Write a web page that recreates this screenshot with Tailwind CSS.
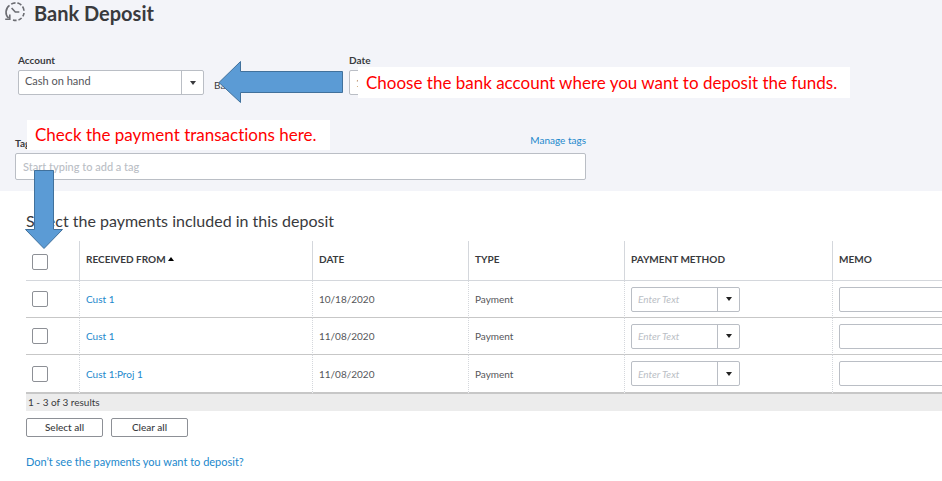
<!DOCTYPE html>
<html lang="en">
<head>
<meta charset="UTF-8">
<meta name="viewport" content="width=device-width, initial-scale=1.0">
<title>Bank Deposit</title>
<script src="https://cdn.jsdelivr.net/npm/@tailwindcss/browser@4"></script>
</head>
<body class="relative min-h-screen overflow-x-hidden bg-white font-['Lato',sans-serif] text-[#393a3d] [font-variant-ligatures:none]">

<!-- Deposit details -->
<header class="bg-[#f3f4f9] pb-[11px]">
  <div class="flex h-[26px] items-center gap-2 pl-1">
    <svg class="size-[22px]" viewBox="0 0 22 22" fill="none" stroke="#6b6c72" stroke-width="1.6" aria-hidden="true">
      <path d="M4.6 16.2A8.3 8.3 0 0 1 5.5 3.4"/>
      <path d="M7.2 2.2A8.3 8.3 0 0 1 20 9.2" stroke-dasharray="4.5 1.8"/>
      <path d="M20 11A8.3 8.3 0 0 1 9 17.9" stroke-dasharray="3.6 2"/>
      <path d="M1.2 17.2h4.6v-4.6"/>
      <path d="M7.6 6l3.7 4h4"/>
    </svg>
    <h1 class="text-[20px] leading-6 font-bold">Bank Deposit</h1>
  </div>

  <div class="mt-7 flex pl-[18px]">
    <div class="w-[186px]">
      <label for="account" class="block text-[10px] leading-3 font-bold">Account</label>
      <div class="relative mt-1 h-[25px]">
        <select id="account" class="block h-full w-full appearance-none rounded-xs border border-[#babec5] bg-white pb-0.5 pl-1.5 text-[11px] text-[#55565a]">
          <option>Cash on hand</option>
        </select>
        <span class="pointer-events-none absolute inset-y-0 right-0 flex w-[23px] items-center justify-center border-l border-[#babec5]">
          <svg class="h-1 w-1.5" viewBox="0 0 6 4" fill="#393a3d"><path d="M0 0h6L3 4z"/></svg>
        </span>
      </div>
    </div>
    <span class="w-[145px] self-end pb-1 pl-[10px] text-[10px] leading-3">Balance</span>
    <div class="w-[110px]">
      <label for="date" class="block text-[10px] leading-3 font-bold">Date</label>
      <input id="date" type="text" value="11/08/2020" class="mt-1 block h-[25px] w-full rounded-xs border border-[#babec5] bg-white px-1.5 text-[11px] text-[#55565a]">
    </div>
  </div>

  <div class="mt-[39px] ml-[15px] max-w-[571px]">
    <div class="flex items-end justify-between">
      <label for="tags" class="pb-1 text-[10px] leading-3 font-bold">Tags</label>
      <a href="#" class="pb-[7px] text-[10px] leading-3 text-[#2288cc]">Manage tags</a>
    </div>
    <input id="tags" type="text" placeholder="Start typing to add a tag" class="block h-[27px] w-full rounded-xs border border-[#babec5] bg-white px-[7px] text-[11px] font-medium placeholder:text-[#babec5]">
  </div>
</header>

<!-- Payments -->
<main class="pl-[26px]">
  <h2 class="pt-5 text-[16px] leading-5">Select the payments included in this deposit</h2>

  <div class="mt-[10px] overflow-hidden">
    <table class="w-full table-fixed border-separate border-spacing-0 text-left text-[10px] leading-3">
      <thead>
        <tr class="h-10 [&>th]:border-b [&>th]:border-[#d4d7dc] [&>th+th]:border-l [&>th+th]:pb-[3px] [&>th+th]:pl-1.5">
          <th class="w-[53px] pt-[3px] pl-1.5"><input type="checkbox" aria-label="Select all payments" class="block size-4 appearance-none rounded-xs border border-[#8d9096] bg-white"></th>
          <th class="w-[233px]">RECEIVED FROM
            <svg class="inline-block h-1 w-1.5 align-[2px]" viewBox="0 0 6 4" fill="#000"><path d="M0 4h6L3 0z"/></svg>
          </th>
          <th class="w-[156px]">DATE</th>
          <th class="w-[156px]">TYPE</th>
          <th class="w-[208px]">PAYMENT METHOD</th>
          <th>MEMO</th>
        </tr>
      </thead>
      <tbody id="payments"></tbody>
    </table>
    <p class="h-[17px] bg-[#ececec] pl-0.5 text-[10px] leading-4">1 - 3 of 3 results</p>
  </div>

  <div class="mt-[7px] flex gap-2">
    <button type="button" class="h-[19px] w-[77px] rounded-xs border border-[#8d9096] bg-white pb-0.5 text-[10px] leading-3 font-medium">Select all</button>
    <button type="button" class="h-[19px] w-[77px] rounded-xs border border-[#8d9096] bg-white pb-0.5 text-[10px] leading-3 font-medium">Clear all</button>
  </div>
  <a href="#" class="mt-[17px] block text-[11px] leading-4 text-[#2288cc]">Don’t see the payments you want to deposit?</a>
</main>

<!-- Annotations over the form -->
<svg class="absolute top-[60px] left-[218px] h-[44px] w-[126px]" viewBox="0 0 126 44" fill="#5b9bd5" stroke="#41719c" aria-hidden="true">
  <path d="M1 22.5L22.5 1.5v10h102v21h-102v10z"/>
</svg>
<p class="absolute top-[67px] left-[358px] w-[492px] bg-white pl-2 text-[17px] leading-[31px] whitespace-nowrap text-[#ff0000]">Choose the bank account where you want to deposit the funds.</p>
<p class="absolute top-[120px] left-[27px] w-[303px] bg-white pl-2 text-[17px] leading-[30px] whitespace-nowrap text-[#ff0000]">Check the payment transactions here.</p>
<svg class="absolute top-[169px] left-[24px] h-[81px] w-[40px]" viewBox="0 0 40 81" fill="#5b9bd5" stroke="#41719c" aria-hidden="true">
  <path d="M10.5 1.5h19v59h9L20 79.5L1.5 60.5h9z"/>
</svg>

<script>
  const payments = [
    { from: 'Cust 1', date: '10/18/2020', type: 'Payment' },
    { from: 'Cust 1', date: '11/08/2020', type: 'Payment' },
    { from: 'Cust 1:Proj 1', date: '11/08/2020', type: 'Payment' }
  ];

  document.getElementById('payments').innerHTML = payments.map((p, i) => `
    <tr class="h-[37px] text-[#55565a] last:h-[39px] [&>td]:border-b [&>td]:border-[#c7c7c7] [&:last-child>td]:border-b-2 [&>td+td]:border-l [&>td+td]:border-l-[#d4d7dc] [&>td+td]:[border-left-style:dotted] [&>td+td]:pl-1.5">
      <td class="pl-1.5"><input type="checkbox" aria-label="Select payment ${i + 1}" class="block size-4 appearance-none rounded-xs border border-[#8d9096] bg-white"></td>
      <td><a href="#" class="text-[#2288cc]">${p.from}</a></td>
      <td>${p.date}</td>
      <td>${p.type}</td>
      <td>
        <div class="flex h-[25px] w-[109px] rounded-xs border border-[#babec5] bg-white">
          <input type="text" placeholder="Enter Text" aria-label="Payment method ${i + 1}" class="w-0 flex-1 px-1.5 italic placeholder:text-[#babec5]">
          <button type="button" aria-label="Show payment methods" class="flex w-[22px] items-center justify-center border-l border-[#babec5]">
            <svg class="h-1 w-1.5" viewBox="0 0 6 4" fill="#222"><path d="M0 0h6L3 4z"/></svg>
          </button>
        </div>
      </td>
      <td><input type="text" aria-label="Memo ${i + 1}" class="block h-[25px] w-[160px] rounded-xs border border-[#babec5] bg-white px-1.5"></td>
    </tr>`).join('');
</script>

</body>
</html>
